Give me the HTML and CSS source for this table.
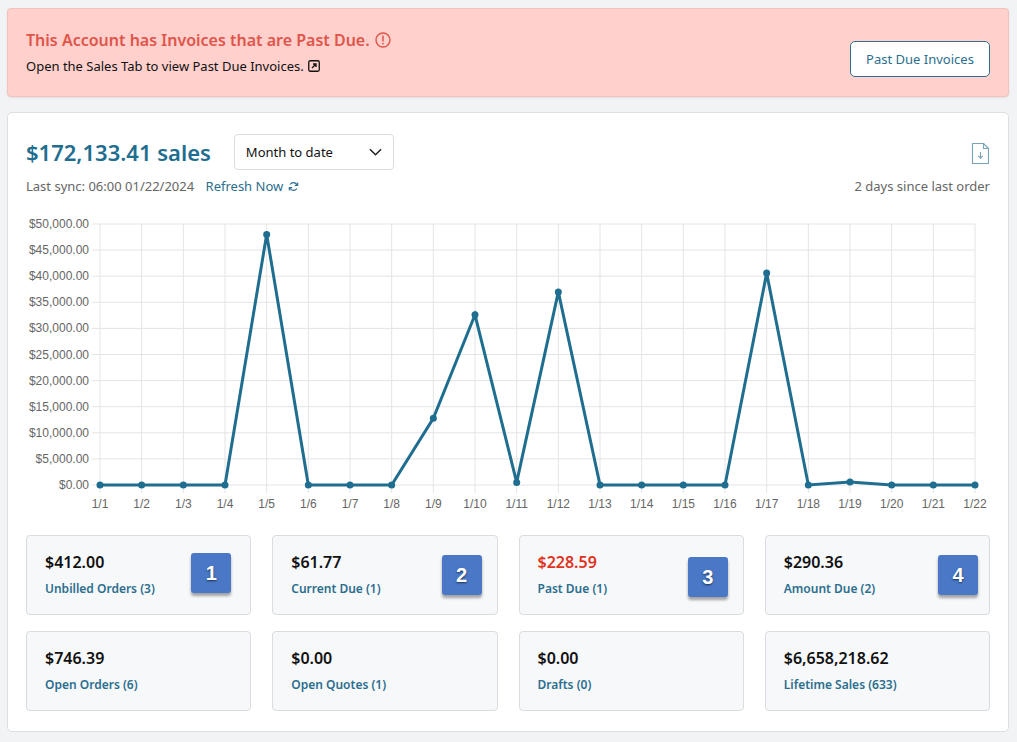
FILE: index.html
```html
<!DOCTYPE html>
<html lang="en">
<head>
<meta charset="utf-8">
<title>Account Dashboard</title>
<link rel="stylesheet" href="styles.css">
</head>
<body>
<div class="alert">
  <div class="alert-text">
    <div class="alert-title">This Account has Invoices that are Past Due.
      <svg class="info-icon" viewBox="0 0 16 16" width="16" height="16"><circle cx="8" cy="8" r="7" fill="none" stroke="#e0554a" stroke-width="1.4"/><line x1="8" y1="4" x2="8" y2="9" stroke="#e0554a" stroke-width="1.5" stroke-linecap="round"/><circle cx="8" cy="11.6" r="0.9" fill="#e0554a"/></svg>
    </div>
    <div class="alert-sub">Open the Sales Tab to view Past Due Invoices.
      <svg class="ext-icon" viewBox="0 0 12 12" width="12" height="12"><rect x="0.75" y="0.75" width="10.5" height="10.5" rx="1.5" fill="none" stroke="#111" stroke-width="1.3"/><path d="M4 8 L8 4 M5 4 H8 V7" fill="none" stroke="#111" stroke-width="1.3"/></svg>
    </div>
  </div>
  <button class="btn-outline">Past Due Invoices</button>
</div>

<div class="card">
  <div class="card-header">
    <div class="header-left">
      <h1 class="sales-total">$172,133.41 sales</h1>
      <div class="select">
        <span>Month to date</span>
        <svg viewBox="0 0 14 8" width="13" height="8"><path d="M1 1 L7 7 L13 1" fill="none" stroke="#222" stroke-width="1.6"/></svg>
      </div>
    </div>
    <svg class="download-icon" viewBox="0 0 19 23" width="19" height="23"><path d="M1.5 1.5 H12.5 L17.5 6.5 V21.5 H1.5 Z" fill="none" stroke="#7aa3ba" stroke-width="1.1" stroke-linejoin="round"/><path d="M12.5 1.5 V6.5 H17.5" fill="none" stroke="#7aa3ba" stroke-width="1.1"/><path d="M9.5 10 V16 M7.2 13.8 L9.5 16.2 L11.8 13.8" fill="none" stroke="#7aa3ba" stroke-width="1.1"/></svg>
  </div>
  <div class="sync-row">
    <div class="sync-left">Last sync: 06:00 01/22/2024 <a class="refresh">Refresh Now
      <svg viewBox="0 0 12 12" width="11" height="11"><path d="M10 4.5 A4.3 4.3 0 0 0 2.3 3.8" fill="none" stroke="#2b6e8e" stroke-width="1.2"/><path d="M2 7.5 A4.3 4.3 0 0 0 9.7 8.2" fill="none" stroke="#2b6e8e" stroke-width="1.2"/><path d="M10.6 1.6 V4.8 H7.4" fill="none" stroke="#2b6e8e" stroke-width="1.2"/><path d="M1.4 10.4 V7.2 H4.6" fill="none" stroke="#2b6e8e" stroke-width="1.2"/></svg></a></div>
    <div class="sync-right">2 days since last order</div>
  </div>

  <svg class="chart" viewBox="0 0 964 318" width="964" height="318">
    <g class="grid">
      <line x1="66" y1="23" x2="949" y2="23"/>
      <line x1="66" y1="49.1" x2="949" y2="49.1"/>
      <line x1="66" y1="75.2" x2="949" y2="75.2"/>
      <line x1="66" y1="101.3" x2="949" y2="101.3"/>
      <line x1="66" y1="127.4" x2="949" y2="127.4"/>
      <line x1="66" y1="153.5" x2="949" y2="153.5"/>
      <line x1="66" y1="179.6" x2="949" y2="179.6"/>
      <line x1="66" y1="205.7" x2="949" y2="205.7"/>
      <line x1="66" y1="231.8" x2="949" y2="231.8"/>
      <line x1="66" y1="257.9" x2="949" y2="257.9"/>
      <line x1="66" y1="284" x2="949" y2="284"/>
      <line x1="74" y1="23" x2="74" y2="292"/>
      <line x1="115.67" y1="23" x2="115.67" y2="292"/>
      <line x1="157.33" y1="23" x2="157.33" y2="292"/>
      <line x1="199" y1="23" x2="199" y2="292"/>
      <line x1="240.67" y1="23" x2="240.67" y2="292"/>
      <line x1="282.33" y1="23" x2="282.33" y2="292"/>
      <line x1="324" y1="23" x2="324" y2="292"/>
      <line x1="365.67" y1="23" x2="365.67" y2="292"/>
      <line x1="407.33" y1="23" x2="407.33" y2="292"/>
      <line x1="449" y1="23" x2="449" y2="292"/>
      <line x1="490.67" y1="23" x2="490.67" y2="292"/>
      <line x1="532.33" y1="23" x2="532.33" y2="292"/>
      <line x1="574" y1="23" x2="574" y2="292"/>
      <line x1="615.67" y1="23" x2="615.67" y2="292"/>
      <line x1="657.33" y1="23" x2="657.33" y2="292"/>
      <line x1="699" y1="23" x2="699" y2="292"/>
      <line x1="740.67" y1="23" x2="740.67" y2="292"/>
      <line x1="782.33" y1="23" x2="782.33" y2="292"/>
      <line x1="824" y1="23" x2="824" y2="292"/>
      <line x1="865.67" y1="23" x2="865.67" y2="292"/>
      <line x1="907.33" y1="23" x2="907.33" y2="292"/>
      <line x1="949" y1="23" x2="949" y2="292"/>
    </g>
    <g class="ylabels">
      <text x="63" y="27">$50,000.00</text>
      <text x="63" y="53.1">$45,000.00</text>
      <text x="63" y="79.2">$40,000.00</text>
      <text x="63" y="105.3">$35,000.00</text>
      <text x="63" y="131.4">$30,000.00</text>
      <text x="63" y="157.5">$25,000.00</text>
      <text x="63" y="183.6">$20,000.00</text>
      <text x="63" y="209.7">$15,000.00</text>
      <text x="63" y="235.8">$10,000.00</text>
      <text x="63" y="261.9">$5,000.00</text>
      <text x="63" y="288">$0.00</text>
    </g>
    <g class="xlabels">
      <text x="74" y="307">1/1</text>
      <text x="115.67" y="307">1/2</text>
      <text x="157.33" y="307">1/3</text>
      <text x="199" y="307">1/4</text>
      <text x="240.67" y="307">1/5</text>
      <text x="282.33" y="307">1/6</text>
      <text x="324" y="307">1/7</text>
      <text x="365.67" y="307">1/8</text>
      <text x="407.33" y="307">1/9</text>
      <text x="449" y="307">1/10</text>
      <text x="490.67" y="307">1/11</text>
      <text x="532.33" y="307">1/12</text>
      <text x="574" y="307">1/13</text>
      <text x="615.67" y="307">1/14</text>
      <text x="657.33" y="307">1/15</text>
      <text x="699" y="307">1/16</text>
      <text x="740.67" y="307">1/17</text>
      <text x="782.33" y="307">1/18</text>
      <text x="824" y="307">1/19</text>
      <text x="865.67" y="307">1/20</text>
      <text x="907.33" y="307">1/21</text>
      <text x="949" y="307">1/22</text>
    </g>
    <polyline class="series" points="74,284 115.67,284 157.33,284 199,284 240.67,33.4 282.33,284 324,284 365.67,284 407.33,217.2 449,113.8 490.67,281.4 532.33,90.9 574,284 615.67,284 657.33,284 699,284 740.67,72.1 782.33,284 824,280.9 865.67,284 907.33,284 949,284"/>
    <g class="points">
      <circle cx="74" cy="284" r="3.5"/><circle cx="115.67" cy="284" r="3.5"/><circle cx="157.33" cy="284" r="3.5"/><circle cx="199" cy="284" r="3.5"/><circle cx="240.67" cy="33.4" r="3.5"/><circle cx="282.33" cy="284" r="3.5"/><circle cx="324" cy="284" r="3.5"/><circle cx="365.67" cy="284" r="3.5"/><circle cx="407.33" cy="217.2" r="3.5"/><circle cx="449" cy="113.8" r="3.5"/><circle cx="490.67" cy="281.4" r="3.5"/><circle cx="532.33" cy="90.9" r="3.5"/><circle cx="574" cy="284" r="3.5"/><circle cx="615.67" cy="284" r="3.5"/><circle cx="657.33" cy="284" r="3.5"/><circle cx="699" cy="284" r="3.5"/><circle cx="740.67" cy="72.1" r="3.5"/><circle cx="782.33" cy="284" r="3.5"/><circle cx="824" cy="280.9" r="3.5"/><circle cx="865.67" cy="284" r="3.5"/><circle cx="907.33" cy="284" r="3.5"/><circle cx="949" cy="284" r="3.5"/>
    </g>
  </svg>

  <div class="stats">
    <div class="stat">
      <div class="stat-value">$412.00</div>
      <a class="stat-label">Unbilled Orders (3)</a>
      <span class="badge badge-1">1</span>
    </div>
    <div class="stat">
      <div class="stat-value">$61.77</div>
      <a class="stat-label">Current Due (1)</a>
      <span class="badge badge-2">2</span>
    </div>
    <div class="stat">
      <div class="stat-value danger">$228.59</div>
      <a class="stat-label">Past Due (1)</a>
      <span class="badge badge-3">3</span>
    </div>
    <div class="stat">
      <div class="stat-value">$290.36</div>
      <a class="stat-label">Amount Due (2)</a>
      <span class="badge badge-4">4</span>
    </div>
    <div class="stat">
      <div class="stat-value">$746.39</div>
      <a class="stat-label">Open Orders (6)</a>
    </div>
    <div class="stat">
      <div class="stat-value">$0.00</div>
      <a class="stat-label">Open Quotes (1)</a>
    </div>
    <div class="stat">
      <div class="stat-value">$0.00</div>
      <a class="stat-label">Drafts (0)</a>
    </div>
    <div class="stat">
      <div class="stat-value">$6,658,218.62</div>
      <a class="stat-label">Lifetime Sales (633)</a>
    </div>
  </div>
</div>
</body>
</html>
```

FILE: styles.css
```css
* { box-sizing: border-box; }
html, body { margin: 0; }
body {
  background: #f1f3f5;
  padding: 8px 8px 8px 7px;
  font-family: "Noto Sans", "Open Sans", sans-serif;
  color: #111;
}
.alert {
  display: flex;
  justify-content: space-between;
  align-items: flex-end;
  background: #ffd0cc;
  border: 1px solid #f4c2bd;
  border-radius: 4px;
  padding: 20px 18px 20px 18px;
  height: 89px;
  box-shadow: 0 1px 2px rgba(0,0,0,0.08);
}
.alert-title {
  color: #e0554a;
  font-size: 16px;
  font-weight: 600;
  line-height: 22px;
  display: flex;
  align-items: center;
  gap: 5px;
}
.alert-sub {
  margin-top: 5px;
  font-size: 13px;
  line-height: 20px;
  display: flex;
  align-items: center;
  gap: 4px;
}
.btn-outline {
  width: 140px;
  height: 36px;
  background: #fff;
  border: 1px solid #2b6e8e;
  border-radius: 5px;
  color: #2b6e8e;
  font-family: "Noto Sans", sans-serif;
  font-size: 13px;
  margin-bottom: -1px;
}
.card {
  margin-top: 15px;
  background: #fff;
  border: 1px solid #dcdfe3;
  border-radius: 5px;
  padding: 21px 18px 20px 18px;
}
.card-header {
  display: flex;
  justify-content: space-between;
  align-items: center;
  height: 36px;
}
.header-left {
  display: flex;
  align-items: center;
  gap: 23px;
}
.sales-total {
  margin: 0;
  font-size: 22px;
  font-weight: 600;
  color: #1f6e8f;
  line-height: 28px;
}
.select {
  width: 160px;
  height: 36px;
  border: 1px solid #d9dce0;
  border-radius: 4px;
  display: flex;
  align-items: center;
  justify-content: space-between;
  padding: 0 11px 0 11px;
  font-size: 13px;
  color: #111;
}
.download-icon { margin-top: 2px; }
.sync-row {
  margin-top: 6px;
  display: flex;
  justify-content: space-between;
  align-items: center;
  height: 20px;
  font-size: 13px;
  color: #666;
}
.refresh {
  color: #2b6e8e;
  margin-left: 8px;
}
.refresh svg { vertical-align: -1px; margin-left: 1px; }
.chart {
  display: block;
  margin-top: 5px;
}
.grid line { stroke: #e4e4e4; stroke-width: 1; }
.ylabels text {
  font-family: "Liberation Sans", Arial, sans-serif;
  font-size: 12px;
  fill: #666;
  text-anchor: end;
}
.xlabels text {
  font-family: "Liberation Sans", Arial, sans-serif;
  font-size: 12px;
  fill: #666;
  text-anchor: middle;
}
.series {
  fill: none;
  stroke: #1f6e8f;
  stroke-width: 3;
  stroke-linejoin: miter;
}
.points circle { fill: #1f6e8f; }
.stats {
  margin-top: 16px;
  display: grid;
  grid-template-columns: repeat(4, 1fr);
  gap: 16px 21px;
}
.stat {
  position: relative;
  height: 80px;
  background: #f7f8fa;
  border: 1px solid #d9dce0;
  border-radius: 4px;
  padding: 15px 18px;
}
.stat-value {
  font-size: 16px;
  font-weight: 600;
  line-height: 22px;
  color: #111;
}
.stat-value.danger { color: #e0321e; }
.stat-label {
  display: block;
  margin-top: 7px;
  font-size: 12px;
  font-weight: 600;
  line-height: 18px;
  color: #2b6e8e;
}
.badge {
  position: absolute;
  width: 40px;
  height: 40px;
  background: #4a78c6;
  border-radius: 3px;
  box-shadow: 0 3px 3px rgba(0,0,0,0.35);
  color: #fff;
  font-family: "Liberation Sans", Arial, sans-serif;
  font-size: 20px;
  font-weight: 700;
  display: flex;
  align-items: center;
  justify-content: center;
  text-shadow: 0 1px 2px rgba(0,0,0,0.6);
}
.badge-1 { right: 19px; top: 17px; }
.badge-2 { right: 15px; top: 19px; }
.badge-3 { right: 15px; top: 21px; }
.badge-4 { right: 11px; top: 19px; }
```
